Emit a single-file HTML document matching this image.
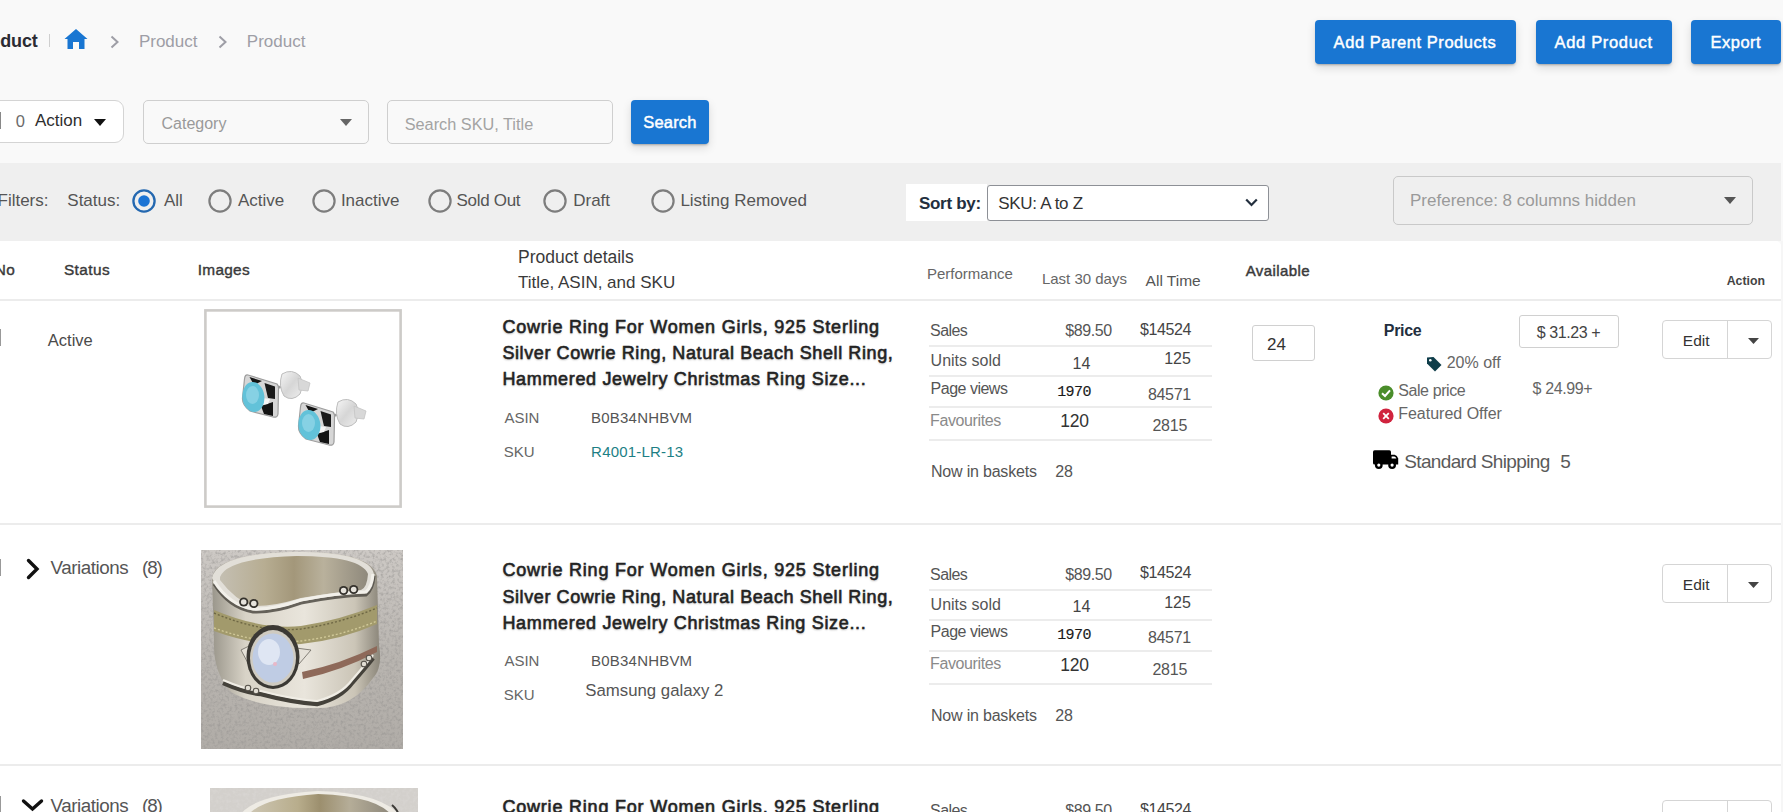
<!DOCTYPE html><html><head><meta charset="utf-8"><style>
html,body{margin:0;padding:0;width:1783px;height:812px;overflow:hidden;background:#f9f9f9;font-family:"Liberation Sans",sans-serif}
.t{position:absolute;line-height:1;white-space:nowrap}
.r{position:absolute}
.btn{position:absolute;background:#1976d2;border-radius:4px;box-shadow:0 3px 1px -2px rgba(0,0,0,0.12),0 2px 2px 0 rgba(0,0,0,0.1),0 4px 10px 0 rgba(0,0,0,0.12)}
</style></head><body>
<div class="r" style="left:0px;top:0px;width:1783px;height:163px;background:#f9f9f9"></div>
<div class="r" style="left:0px;top:163px;width:1781px;height:78px;background:#efefef"></div>
<div class="r" style="left:0px;top:241px;width:1781px;height:571px;background:#fff;border-top-right-radius:5px"></div>
<div class="r" style="left:1781px;top:241px;width:2px;height:571px;background:#f6f6f6"></div>
<div class="t" style="right:1745.5px;top:32.1px;font-size:18px;font-weight:bold;color:#2b2b33;letter-spacing:-0.2px">Product</div>
<div class="r" style="left:49px;top:34px;width:1px;height:13px;background:#cfcfcf"></div>
<svg class="r" style="left:64px;top:28px" width="24" height="22" viewBox="0 0 24 22"><path d="M12 1 L23.5 11 L20.5 11 L20.5 21 L15 21 L15 14 L9 14 L9 21 L3.5 21 L3.5 11 L0.5 11 Z" fill="#1976d2"/></svg>
<svg class="r" style="left:110px;top:35px" width="10" height="14" viewBox="0 0 10 14"><path d="M1.5 1.5 L7.5 7 L1.5 12.5" stroke="#9e9ea6" stroke-width="2" fill="none"/></svg>
<svg class="r" style="left:218px;top:35px" width="10" height="14" viewBox="0 0 10 14"><path d="M1.5 1.5 L7.5 7 L1.5 12.5" stroke="#9e9ea6" stroke-width="2" fill="none"/></svg>
<div class="t" style="left:138.9px;top:32.7px;font-size:17px;color:#9e9ea6">Product</div>
<div class="t" style="left:246.8px;top:32.7px;font-size:17px;color:#9e9ea6">Product</div>
<div class="btn" style="left:1315px;top:20px;width:201px;height:44px;"></div>
<div class="t" style="left:1333.6px;top:33.7px;font-size:16.5px;color:#fff;letter-spacing:0.55px;-webkit-text-stroke:0.45px #fff">Add Parent Products</div>
<div class="btn" style="left:1536px;top:20px;width:136px;height:44px;"></div>
<div class="t" style="left:1554.6px;top:33.7px;font-size:16.5px;color:#fff;letter-spacing:0.66px;-webkit-text-stroke:0.45px #fff">Add Product</div>
<div class="btn" style="left:1691px;top:20px;width:90px;height:44px;"></div>
<div class="t" style="left:1710.6px;top:33.7px;font-size:16.5px;color:#fff;letter-spacing:0.48px;-webkit-text-stroke:0.45px #fff">Export</div>
<div class="r" style="left:-20px;top:100px;width:144px;height:43px;background:#fff;border:1px solid #d4d4d4;border-radius:9px;box-sizing:border-box"></div>
<div class="r" style="left:0px;top:112px;width:1px;height:17px;background:#888"></div>
<div class="t" style="left:15.7px;top:112.5px;font-size:16.5px;color:#6b6b6b">0</div>
<div class="t" style="left:35.0px;top:112.1px;font-size:17px;color:#2e2e2e">Action</div>
<svg class="r" style="left:94px;top:119px" width="12" height="7" viewBox="0 0 12 7"><path d="M0 0 L12 0 L6 7 Z" fill="#111"/></svg>
<div class="r" style="left:143px;top:100px;width:226px;height:44px;border:1px solid #cfcfcf;border-radius:5px;box-sizing:border-box"></div>
<div class="t" style="left:161.5px;top:116.2px;font-size:16px;color:#9a9a9a">Category</div>
<svg class="r" style="left:340px;top:119px" width="12" height="7" viewBox="0 0 12 7"><path d="M0 0 L12 0 L6 7 Z" fill="#666"/></svg>
<div class="r" style="left:387px;top:100px;width:226px;height:44px;border:1px solid #cfcfcf;border-radius:5px;box-sizing:border-box"></div>
<div class="t" style="left:404.7px;top:116.0px;font-size:16.3px;color:#a3a3a3">Search SKU, Title</div>
<div class="btn" style="left:631px;top:100px;width:78px;height:44px;"></div>
<div class="t" style="left:643.2px;top:113.6px;font-size:16.5px;color:#fff;letter-spacing:0.2px;-webkit-text-stroke:0.45px #fff">Search</div>
<div class="t" style="left:-2.5px;top:191.9px;font-size:17px;color:#555">Filters:</div>
<div class="t" style="left:67.3px;top:191.9px;font-size:17px;color:#555">Status:</div>
<svg class="r" style="left:131.8px;top:189px" width="24" height="24" viewBox="0 0 24 24"><circle cx="12" cy="12" r="10.6" stroke="#2468b0" stroke-width="2.3" fill="none"/><circle cx="12" cy="12" r="5.8" fill="#1a73d4"/></svg>
<div class="t" style="left:164.0px;top:191.9px;font-size:17px;color:#555">All</div>
<svg class="r" style="left:207.5px;top:189px" width="24" height="24" viewBox="0 0 24 24"><circle cx="12" cy="12" r="10.6" stroke="#7d7d7d" stroke-width="2.2" fill="none"/></svg>
<div class="t" style="left:238.0px;top:191.9px;font-size:17px;color:#555">Active</div>
<svg class="r" style="left:311.6px;top:189px" width="24" height="24" viewBox="0 0 24 24"><circle cx="12" cy="12" r="10.6" stroke="#7d7d7d" stroke-width="2.2" fill="none"/></svg>
<div class="t" style="left:340.9px;top:191.9px;font-size:17px;color:#555">Inactive</div>
<svg class="r" style="left:427.5px;top:189px" width="24" height="24" viewBox="0 0 24 24"><circle cx="12" cy="12" r="10.6" stroke="#7d7d7d" stroke-width="2.2" fill="none"/></svg>
<div class="t" style="left:456.5px;top:191.9px;font-size:17px;color:#555;letter-spacing:-0.3px">Sold Out</div>
<svg class="r" style="left:542.6px;top:189px" width="24" height="24" viewBox="0 0 24 24"><circle cx="12" cy="12" r="10.6" stroke="#7d7d7d" stroke-width="2.2" fill="none"/></svg>
<div class="t" style="left:573.2px;top:191.9px;font-size:17px;color:#555">Draft</div>
<svg class="r" style="left:650.7px;top:189px" width="24" height="24" viewBox="0 0 24 24"><circle cx="12" cy="12" r="10.6" stroke="#7d7d7d" stroke-width="2.2" fill="none"/></svg>
<div class="t" style="left:680.4px;top:192.3px;font-size:17px;color:#555">Listing Removed</div>
<div class="r" style="left:906px;top:184px;width:81px;height:37px;background:#fff"></div>
<div class="t" style="left:919.0px;top:194.6px;font-size:17px;font-weight:bold;color:#232f3e;letter-spacing:-0.3px">Sort by:</div>
<div class="r" style="left:987px;top:185px;width:282px;height:36px;background:#fff;border:1px solid #8d9096;border-radius:3px;box-sizing:border-box"></div>
<div class="t" style="left:998.2px;top:194.6px;font-size:17px;color:#333;letter-spacing:-0.3px">SKU: A to Z</div>
<svg class="r" style="left:1245px;top:198px" width="13" height="9" viewBox="0 0 13 9"><path d="M1.2 1.5 L6.5 7 L11.8 1.5" stroke="#232f3e" stroke-width="2.2" fill="none"/></svg>
<div class="r" style="left:1393px;top:176px;width:360px;height:49px;border:1px solid #c9c9c9;border-radius:5px;box-sizing:border-box"></div>
<div class="t" style="left:1410.0px;top:191.9px;font-size:17px;color:#9a9a9a">Preference: 8 columns hidden</div>
<svg class="r" style="left:1724px;top:197px" width="12" height="7" viewBox="0 0 12 7"><path d="M0 0 L12 0 L6 7 Z" fill="#555"/></svg>
<div class="t" style="left:-5.2px;top:261.8px;font-size:15.4px;color:#3a3a3a;-webkit-text-stroke:0.4px #3a3a3a;letter-spacing:0.3px">No</div>
<div class="t" style="left:63.9px;top:261.8px;font-size:15.4px;color:#3a3a3a;-webkit-text-stroke:0.4px #3a3a3a;letter-spacing:0.45px">Status</div>
<div class="t" style="left:197.7px;top:261.8px;font-size:15.4px;color:#3a3a3a;-webkit-text-stroke:0.4px #3a3a3a;letter-spacing:0.3px">Images</div>
<div class="t" style="left:518.0px;top:249.3px;font-size:17.5px;color:#3a3a3a">Product details</div>
<div class="t" style="left:518.0px;top:273.6px;font-size:17px;color:#3a3a3a">Title, ASIN, and SKU</div>
<div class="t" style="left:927.0px;top:266.0px;font-size:15px;color:#666">Performance</div>
<div class="t" style="left:1041.9px;top:271.0px;font-size:15px;color:#666">Last 30 days</div>
<div class="t" style="left:1145.6px;top:273.4px;font-size:15.5px;color:#555">All Time</div>
<div class="t" style="left:1245.7px;top:263.2px;font-size:15px;color:#3a3a3a;-webkit-text-stroke:0.45px #3a3a3a;letter-spacing:0.4px">Available</div>
<div class="t" style="left:1726.7px;top:275.1px;font-size:12.3px;font-weight:bold;color:#444">Action</div>
<div class="r" style="left:0px;top:299px;width:1781px;height:2px;background:#ececec"></div>
<div class="r" style="left:0px;top:329px;width:1px;height:17px;background:#999"></div>
<div class="t" style="left:47.8px;top:331.5px;font-size:16.5px;color:#4a4a4a">Active</div>
<svg class="r" style="left:204px;top:309px" width="198" height="199" viewBox="204 309 198 199"><defs><linearGradient id="bk" x1="0" y1="0" x2="1" y2="1"><stop offset="0" stop-color="#f6f6f6"/><stop offset="0.5" stop-color="#d6d6d6"/><stop offset="1" stop-color="#eeeeee"/></linearGradient></defs><rect x="205.4" y="310.4" width="195.2" height="196.2" fill="#fff" stroke="#cdcbc8" stroke-width="2.6"/><g transform="translate(0,0)"><path d="M276 388 L292 384" stroke="#9c9c9c" stroke-width="2.5"/><path d="M282 374 Q292 368 300 376 Q304 384 300 394 Q292 402 284 396 Q278 386 282 374 Z" fill="url(#bk)" stroke="#bdbdbd" stroke-width="1"/><path d="M298 378 L310 383 L308 391 L299 390 Z" fill="#d8d8d8" stroke="#c4c4c4" stroke-width="0.8"/><path d="M248 375 L277 384 Q279 386 278.5 390 L278 414 Q277.5 418 273 417 L250 411 Q242 405 242.5 398 L244.5 379 Q245 374 248 375 Z" fill="#d6d6d6" stroke="#9e9e9e" stroke-width="1.2"/><path d="M249.5 377 L262 381 L254 385 Z" fill="#141414"/><path d="M264.5 383 L275 386.5 L275 399 L268 398 Q266 390 264.5 383 Z" fill="#1a1a1a"/><path d="M261 406 L273 402 L273 416 L264 414 Z" fill="#141414"/><path d="M262 398 L270 399 L268 404 L261 405 Z" fill="#f6f6f6"/><ellipse cx="253.4" cy="397" rx="11" ry="15" fill="#62c2d9" transform="rotate(-6 253.4 397)"/><ellipse cx="252.5" cy="395" rx="6.5" ry="9" fill="#86d1e4"/></g><g transform="translate(56,28)"><path d="M276 388 L292 384" stroke="#9c9c9c" stroke-width="2.5"/><path d="M282 374 Q292 368 300 376 Q304 384 300 394 Q292 402 284 396 Q278 386 282 374 Z" fill="url(#bk)" stroke="#bdbdbd" stroke-width="1"/><path d="M298 378 L310 383 L308 391 L299 390 Z" fill="#d8d8d8" stroke="#c4c4c4" stroke-width="0.8"/><path d="M248 375 L277 384 Q279 386 278.5 390 L278 414 Q277.5 418 273 417 L250 411 Q242 405 242.5 398 L244.5 379 Q245 374 248 375 Z" fill="#d6d6d6" stroke="#9e9e9e" stroke-width="1.2"/><path d="M249.5 377 L262 381 L254 385 Z" fill="#141414"/><path d="M264.5 383 L275 386.5 L275 399 L268 398 Q266 390 264.5 383 Z" fill="#1a1a1a"/><path d="M261 406 L273 402 L273 416 L264 414 Z" fill="#141414"/><path d="M262 398 L270 399 L268 404 L261 405 Z" fill="#f6f6f6"/><ellipse cx="253.4" cy="397" rx="11" ry="15" fill="#62c2d9" transform="rotate(-6 253.4 397)"/><ellipse cx="252.5" cy="395" rx="6.5" ry="9" fill="#86d1e4"/></g></svg>
<div class="t" style="left:502.4px;top:317.8px;font-size:18px;color:#222;letter-spacing:0.798px;-webkit-text-stroke:0.55px #222;text-shadow:0 1px 2px rgba(0,0,0,0.3)">Cowrie Ring For Women Girls, 925 Sterling</div>
<div class="t" style="left:502.4px;top:344.0px;font-size:18px;color:#222;letter-spacing:0.596px;-webkit-text-stroke:0.55px #222;text-shadow:0 1px 2px rgba(0,0,0,0.3)">Silver Cowrie Ring, Natural Beach Shell Ring,</div>
<div class="t" style="left:502.4px;top:370.2px;font-size:18px;color:#222;letter-spacing:0.664px;-webkit-text-stroke:0.55px #222;text-shadow:0 1px 2px rgba(0,0,0,0.3)">Hammered Jewelry Christmas Ring Size...</div>
<div class="t" style="left:504.4px;top:409.8px;font-size:15px;color:#666">ASIN</div>
<div class="t" style="left:591.1px;top:409.8px;font-size:15px;color:#555;letter-spacing:0.2px">B0B34NHBVM</div>
<div class="t" style="left:503.8px;top:443.9px;font-size:15px;color:#666">SKU</div>
<div class="t" style="left:591.1px;top:443.9px;font-size:15px;color:#1d7f85;letter-spacing:0.2px">R4001-LR-13</div>
<div class="t" style="left:930.1px;top:323.4px;font-size:16px;color:#555;letter-spacing:-0.6px">Sales</div>
<div class="t" style="right:671.2px;top:323.4px;font-size:16px;color:#555;letter-spacing:-0.4px">$89.50</div>
<div class="t" style="right:592.1px;top:321.7px;font-size:16px;color:#444;letter-spacing:-0.4px">$14524</div>
<div class="r" style="left:929px;top:345px;width:283px;height:2px;background:#ececec"></div>
<div class="t" style="left:930.6px;top:353.4px;font-size:16px;color:#555">Units sold</div>
<div class="t" style="right:692.7px;top:355.7px;font-size:16px;color:#444">14</div>
<div class="t" style="right:592.1px;top:351.2px;font-size:16px;color:#444">125</div>
<div class="r" style="left:929px;top:375px;width:283px;height:2px;background:#ececec"></div>
<div class="t" style="left:930.6px;top:380.6px;font-size:16px;color:#555;letter-spacing:-0.5px">Page views</div>
<div class="t" style="right:692.2px;top:384.5px;font-size:15px;font-family:'Liberation Mono';color:#1a1a1a;letter-spacing:-0.6px;-webkit-text-stroke:0.15px #1a1a1a">1970</div>
<div class="t" style="right:592.1px;top:386.5px;font-size:16px;color:#555;letter-spacing:-0.3px">84571</div>
<div class="r" style="left:929px;top:406px;width:283px;height:2px;background:#ececec"></div>
<div class="t" style="left:930.1px;top:412.9px;font-size:16px;color:#8a8a8a;letter-spacing:-0.4px">Favourites</div>
<div class="t" style="right:694.4px;top:413.0px;font-size:17.5px;color:#333;letter-spacing:-0.3px">120</div>
<div class="t" style="right:595.8px;top:418.0px;font-size:16px;color:#555;letter-spacing:-0.2px">2815</div>
<div class="r" style="left:929px;top:439px;width:283px;height:2px;background:#ececec"></div>
<div class="t" style="left:931.0px;top:464.4px;font-size:16px;color:#555;letter-spacing:-0.2px">Now in baskets</div>
<div class="t" style="left:1055.2px;top:464.4px;font-size:16px;color:#555">28</div>
<div class="r" style="left:1662px;top:320px;width:110px;height:39px;border:1px solid #d5d5d5;border-radius:4px;box-sizing:border-box;background:#fff"></div>
<div class="r" style="left:1727px;top:321px;width:1px;height:37px;background:#d5d5d5"></div>
<div class="t" style="left:1682.8px;top:333.2px;font-size:15.5px;color:#333">Edit</div>
<svg class="r" style="left:1748px;top:338px" width="11" height="7" viewBox="0 0 11 7"><path d="M0 0 L11 0 L5.5 6 Z" fill="#444"/></svg>
<div class="r" style="left:1252px;top:325px;width:63px;height:36px;border:1px solid #d0d0d0;border-radius:3px;box-sizing:border-box"></div>
<div class="t" style="left:1267.1px;top:335.5px;font-size:17px;color:#333">24</div>
<div class="t" style="left:1383.8px;top:322.5px;font-size:16px;font-weight:bold;color:#232f3e;letter-spacing:-0.3px">Price</div>
<div class="r" style="left:1519px;top:315px;width:100px;height:33px;border:1px solid #d0d0d0;border-radius:3px;box-sizing:border-box"></div>
<div class="t" style="left:1536.7px;top:324.5px;font-size:16px;color:#444;letter-spacing:-0.4px">$ 31.23 +</div>
<svg class="r" style="left:1426px;top:356px" width="16" height="16" viewBox="0 0 16 16"><path d="M1 1.5 L7.5 1 L15.5 9 L9 15.5 L1 7.5 Z" fill="#0f3d4a"/><circle cx="4.3" cy="4.3" r="1.3" fill="#fff"/></svg>
<div class="t" style="left:1446.7px;top:354.9px;font-size:16px;color:#666">20% off</div>
<svg class="r" style="left:1378px;top:385px" width="16" height="16" viewBox="0 0 16 16"><circle cx="8" cy="8" r="7.6" fill="#4a8d2a"/><path d="M4 8.3 L7 11 L12 5.3" stroke="#fff" stroke-width="2" fill="none"/></svg>
<div class="t" style="left:1398.2px;top:383.2px;font-size:16px;color:#666;letter-spacing:-0.4px">Sale price</div>
<div class="t" style="left:1532.6px;top:381.3px;font-size:16px;color:#666;letter-spacing:-0.4px">$ 24.99+</div>
<svg class="r" style="left:1378px;top:408px" width="16" height="16" viewBox="0 0 16 16"><circle cx="8" cy="8" r="7.6" fill="#d0233e"/><path d="M5.2 5.2 L10.8 10.8 M10.8 5.2 L5.2 10.8" stroke="#fff" stroke-width="1.8"/></svg>
<div class="t" style="left:1398.2px;top:406.2px;font-size:16px;color:#666">Featured Offer</div>
<svg class="r" style="left:1372px;top:449px" width="27" height="21" viewBox="0 0 27 21"><rect x="1" y="1.2" width="18" height="14.4" rx="1.6" fill="#000"/><path d="M18 5.8 L22.6 5.8 Q25.2 6.6 26.2 9.6 L26.2 15.6 L18 15.6 Z" fill="#000"/><path d="M19.6 7.4 L22.4 7.4 Q23.8 8 24.4 9.6 L19.6 9.6 Z" fill="#fff"/><circle cx="6.8" cy="16.1" r="3.9" fill="#000"/><circle cx="6.8" cy="16.1" r="1.6" fill="#fff"/><circle cx="20.1" cy="16.1" r="3.9" fill="#000"/><circle cx="20.1" cy="16.1" r="1.6" fill="#fff"/></svg>
<div class="t" style="left:1404.3px;top:452.1px;font-size:19px;color:#5a5a5a;letter-spacing:-0.65px">Standard Shipping</div>
<div class="t" style="left:1560.3px;top:452.1px;font-size:19px;color:#5a5a5a">5</div>
<div class="r" style="left:0px;top:523px;width:1781px;height:2px;background:#ececec"></div>
<div class="r" style="left:0px;top:559px;width:1px;height:17px;background:#999"></div>
<svg class="r" style="left:26px;top:558px" width="14" height="22" viewBox="0 0 14 22"><path d="M2.5 2.5 L11 11 L2.5 19.5" stroke="#111" stroke-width="3.4" fill="none" stroke-linecap="round"/></svg>
<div class="t" style="left:50.5px;top:559.4px;font-size:18.8px;color:#555;letter-spacing:-0.45px">Variations</div>
<div class="t" style="left:141.9px;top:559.4px;font-size:18.8px;color:#555;letter-spacing:-1px">(8)</div>
<svg class="r" style="left:201px;top:550px" width="202" height="199" viewBox="0 0 202 199.00"><defs><filter id="nza" x="0" y="0" width="1" height="1"><feTurbulence type="fractalNoise" baseFrequency="0.35" numOctaves="3" seed="7"/><feColorMatrix values="0 0 0 0 0.30  0 0 0 0 0.29  0 0 0 0 0.28  0 0 0 2.2 -0.95"/></filter><linearGradient id="rga" x1="0" x2="1"><stop offset="0" stop-color="#9a968b"/><stop offset="0.2" stop-color="#d8d3c7"/><stop offset="0.55" stop-color="#e9e5dc"/><stop offset="0.85" stop-color="#cbc5b7"/><stop offset="1" stop-color="#8a8579"/></linearGradient><linearGradient id="iga" x1="0" x2="1"><stop offset="0" stop-color="#c4bfb2"/><stop offset="0.3" stop-color="#b7ad92"/><stop offset="0.5" stop-color="#a3977a"/><stop offset="0.7" stop-color="#b9b19c"/><stop offset="1" stop-color="#8f897c"/></linearGradient><linearGradient id="bga" x1="0" y1="0" x2="0" y2="1"><stop offset="0" stop-color="#cdc9c5"/><stop offset="0.5" stop-color="#bab6b1"/><stop offset="1" stop-color="#b0aca7"/></linearGradient></defs><rect width="202" height="200" fill="url(#bga)"/><rect width="202" height="200" filter="url(#nza)" opacity="0.6"/><path d="M11 28 Q14 4 92 2 Q170 1 176 26 L178 95 Q182 118 172 128 Q150 160 112 158 Q60 159 30 142 Q12 122 13 92 Z" fill="url(#rga)"/><path d="M11 28 Q16 3 96 2.5 Q168 2 173 24 Q174 40 165 43 Q140 44 100 51 Q70 61 52 60 Q30 54 13 32 Z" fill="#e2dfd8"/><path d="M19 27 Q26 8 96 6 Q160 6 167 24 Q166 38 160 40 Q135 42 100 48 Q70 57 52 56 Q34 50 19 30 Z" fill="url(#iga)"/><path d="M13 34 Q28 58 52 62 Q72 63 100 53 Q135 46 165 45 Q172 40 173 26" stroke="#4f4b44" stroke-width="3" fill="none" opacity="0.85"/><path d="M13 31 Q28 55 52 59 Q72 60 100 50 Q135 43 165 42 Q171 37 172 24" stroke="#f2f0ea" stroke-width="3.2" fill="none"/><circle cx="42.7" cy="52" r="4.6" fill="#34312c"/><circle cx="42.7" cy="52" r="2.8" fill="#e6e3dc"/><circle cx="52.8" cy="53.5" r="4.6" fill="#34312c"/><circle cx="52.8" cy="53.5" r="2.8" fill="#e6e3dc"/><circle cx="142.6" cy="40.5" r="4.6" fill="#34312c"/><circle cx="142.6" cy="40.5" r="2.8" fill="#e6e3dc"/><circle cx="152.7" cy="39.5" r="4.6" fill="#34312c"/><circle cx="152.7" cy="39.5" r="2.8" fill="#e6e3dc"/><path d="M13 60 Q60 80 100 76 Q140 70 176 55 L176 74 Q140 90 100 94 Q60 98 13 81 Z" fill="#a29a6c"/><path d="M13 63 Q60 83 100 79 Q140 73 176 58" stroke="#6e6744" stroke-width="1.4" stroke-dasharray="2 2" fill="none"/><path d="M13 78 Q60 95 100 91 Q140 86 176 71" stroke="#d0c897" stroke-width="1.4" stroke-dasharray="2 2" fill="none"/><path d="M101 122 Q140 114 176 96 L176 102 Q140 121 102 129 Z" fill="#8e6959"/><path d="M22 133 Q45 143 60 144 Q90 152 116 154 Q140 148 151 133 Q164 118 172 108" stroke="#45423b" stroke-width="4.5" fill="none"/><path d="M22 130 Q45 140 60 141 Q90 149 116 151 Q140 145 151 130 Q164 115 172 105" stroke="#f0ede5" stroke-width="2.2" fill="none"/><circle cx="47" cy="138" r="2.8" fill="#e2ded4" stroke="#55514a" stroke-width="1.1"/><circle cx="55" cy="141" r="2.8" fill="#e2ded4" stroke="#55514a" stroke-width="1.1"/><circle cx="163" cy="114" r="2.8" fill="#e2ded4" stroke="#55514a" stroke-width="1.1"/><circle cx="168" cy="108" r="2.8" fill="#e2ded4" stroke="#55514a" stroke-width="1.1"/><path d="M40 100 L50 95 L48 115 Z" fill="#e5e1d8" stroke="#6a665e" stroke-width="0.8"/><path d="M95 98 L110 100 L98 114 Z" fill="#e5e1d8" stroke="#6a665e" stroke-width="0.8"/><ellipse cx="72" cy="107" rx="26.5" ry="32" fill="#3b3934"/><ellipse cx="72" cy="108" rx="23" ry="28" fill="#cfcbc1"/><ellipse cx="72" cy="108" rx="20.5" ry="24.5" fill="#bfcce4"/><ellipse cx="68" cy="102" rx="11" ry="13" fill="#dfe6f3"/><circle cx="74" cy="114" r="2" fill="#e9b8c8"/></svg>
<div class="t" style="left:502.4px;top:561.3px;font-size:18px;color:#222;letter-spacing:0.798px;-webkit-text-stroke:0.55px #222;text-shadow:0 1px 2px rgba(0,0,0,0.3)">Cowrie Ring For Women Girls, 925 Sterling</div>
<div class="t" style="left:502.4px;top:587.5px;font-size:18px;color:#222;letter-spacing:0.596px;-webkit-text-stroke:0.55px #222;text-shadow:0 1px 2px rgba(0,0,0,0.3)">Silver Cowrie Ring, Natural Beach Shell Ring,</div>
<div class="t" style="left:502.4px;top:613.7px;font-size:18px;color:#222;letter-spacing:0.664px;-webkit-text-stroke:0.55px #222;text-shadow:0 1px 2px rgba(0,0,0,0.3)">Hammered Jewelry Christmas Ring Size...</div>
<div class="t" style="left:504.4px;top:653.3px;font-size:15px;color:#666">ASIN</div>
<div class="t" style="left:591.1px;top:653.3px;font-size:15px;color:#555;letter-spacing:0.2px">B0B34NHBVM</div>
<div class="t" style="left:503.8px;top:687.4px;font-size:15px;color:#666">SKU</div>
<div class="t" style="left:585.3px;top:682.8px;font-size:16.8px;color:#555">Samsung galaxy 2</div>
<div class="t" style="left:930.1px;top:566.9px;font-size:16px;color:#555;letter-spacing:-0.6px">Sales</div>
<div class="t" style="right:671.2px;top:566.9px;font-size:16px;color:#555;letter-spacing:-0.4px">$89.50</div>
<div class="t" style="right:592.1px;top:565.2px;font-size:16px;color:#444;letter-spacing:-0.4px">$14524</div>
<div class="r" style="left:929px;top:588.5px;width:283px;height:2px;background:#ececec"></div>
<div class="t" style="left:930.6px;top:596.9px;font-size:16px;color:#555">Units sold</div>
<div class="t" style="right:692.7px;top:599.2px;font-size:16px;color:#444">14</div>
<div class="t" style="right:592.1px;top:594.7px;font-size:16px;color:#444">125</div>
<div class="r" style="left:929px;top:618.5px;width:283px;height:2px;background:#ececec"></div>
<div class="t" style="left:930.6px;top:624.1px;font-size:16px;color:#555;letter-spacing:-0.5px">Page views</div>
<div class="t" style="right:692.2px;top:628.0px;font-size:15px;font-family:'Liberation Mono';color:#1a1a1a;letter-spacing:-0.6px;-webkit-text-stroke:0.15px #1a1a1a">1970</div>
<div class="t" style="right:592.1px;top:630.0px;font-size:16px;color:#555;letter-spacing:-0.3px">84571</div>
<div class="r" style="left:929px;top:649.5px;width:283px;height:2px;background:#ececec"></div>
<div class="t" style="left:930.1px;top:656.4px;font-size:16px;color:#8a8a8a;letter-spacing:-0.4px">Favourites</div>
<div class="t" style="right:694.4px;top:656.5px;font-size:17.5px;color:#333;letter-spacing:-0.3px">120</div>
<div class="t" style="right:595.8px;top:661.5px;font-size:16px;color:#555;letter-spacing:-0.2px">2815</div>
<div class="r" style="left:929px;top:682.5px;width:283px;height:2px;background:#ececec"></div>
<div class="t" style="left:931.0px;top:707.9px;font-size:16px;color:#555;letter-spacing:-0.2px">Now in baskets</div>
<div class="t" style="left:1055.2px;top:707.9px;font-size:16px;color:#555">28</div>
<div class="r" style="left:1662px;top:563.5px;width:110px;height:39px;border:1px solid #d5d5d5;border-radius:4px;box-sizing:border-box;background:#fff"></div>
<div class="r" style="left:1727px;top:564.5px;width:1px;height:37px;background:#d5d5d5"></div>
<div class="t" style="left:1682.8px;top:576.7px;font-size:15.5px;color:#333">Edit</div>
<svg class="r" style="left:1748px;top:581.5px" width="11" height="7" viewBox="0 0 11 7"><path d="M0 0 L11 0 L5.5 6 Z" fill="#444"/></svg>
<div class="r" style="left:0px;top:764px;width:1781px;height:2px;background:#ececec"></div>
<div class="r" style="left:0px;top:796px;width:1px;height:17px;background:#999"></div>
<svg class="r" style="left:21px;top:798px" width="23" height="14" viewBox="0 0 23 14"><path d="M2.5 3 L11.5 11 L20.5 3" stroke="#111" stroke-width="3.4" fill="none" stroke-linecap="round"/></svg>
<div class="t" style="left:50.5px;top:797.4px;font-size:18.8px;color:#555;letter-spacing:-0.45px">Variations</div>
<div class="t" style="left:141.9px;top:797.4px;font-size:18.8px;color:#555;letter-spacing:-1px">(8)</div>
<svg class="r" style="left:210px;top:788px" width="208" height="30" viewBox="210 788 208 30"><defs><linearGradient id="r3" x1="0" x2="1"><stop offset="0" stop-color="#cfc8b6"/><stop offset="0.35" stop-color="#b8ad8c"/><stop offset="0.5" stop-color="#9c8f6e"/><stop offset="0.7" stop-color="#b5ad98"/><stop offset="1" stop-color="#8a8478"/></linearGradient><filter id="nz3"><feTurbulence type="fractalNoise" baseFrequency="0.3" numOctaves="2" seed="2"/><feColorMatrix values="0 0 0 0 0.75  0 0 0 0 0.73  0 0 0 0 0.72  0 0 0 1.5 -0.6"/></filter></defs><rect x="210" y="788" width="208" height="30" fill="#d3d0cc"/><rect x="210" y="788" width="208" height="30" filter="url(#nz3)" opacity="0.5"/><path d="M238 818 Q250 795 318 791 Q385 793 402 818 Z" fill="#eeebe4"/><path d="M246 818 Q258 798 318 794 Q380 796 394 818 Z" fill="url(#r3)"/><path d="M392 805 Q398 810 400 818" stroke="#3c3a36" stroke-width="2" fill="none"/></svg>
<div class="t" style="left:502.4px;top:797.8px;font-size:18px;color:#222;letter-spacing:0.798px;-webkit-text-stroke:0.55px #222;text-shadow:0 1px 2px rgba(0,0,0,0.3)">Cowrie Ring For Women Girls, 925 Sterling</div>
<div class="t" style="left:502.4px;top:824.0px;font-size:18px;color:#222;letter-spacing:0.596px;-webkit-text-stroke:0.55px #222;text-shadow:0 1px 2px rgba(0,0,0,0.3)">Silver Cowrie Ring, Natural Beach Shell Ring,</div>
<div class="t" style="left:502.4px;top:850.2px;font-size:18px;color:#222;letter-spacing:0.664px;-webkit-text-stroke:0.55px #222;text-shadow:0 1px 2px rgba(0,0,0,0.3)">Hammered Jewelry Christmas Ring Size...</div>
<div class="t" style="left:504.4px;top:889.8px;font-size:15px;color:#666">ASIN</div>
<div class="t" style="left:591.1px;top:889.8px;font-size:15px;color:#555;letter-spacing:0.2px">B0B34NHBVM</div>
<div class="t" style="left:503.8px;top:923.9px;font-size:15px;color:#666">SKU</div>
<div class="t" style="left:585.3px;top:919.3px;font-size:16.8px;color:#555">Samsung galaxy 2</div>
<div class="t" style="left:930.1px;top:803.4px;font-size:16px;color:#555;letter-spacing:-0.6px">Sales</div>
<div class="t" style="right:671.2px;top:803.4px;font-size:16px;color:#555;letter-spacing:-0.4px">$89.50</div>
<div class="t" style="right:592.1px;top:801.7px;font-size:16px;color:#444;letter-spacing:-0.4px">$14524</div>
<div class="r" style="left:929px;top:825px;width:283px;height:2px;background:#ececec"></div>
<div class="t" style="left:930.6px;top:833.4px;font-size:16px;color:#555">Units sold</div>
<div class="t" style="right:692.7px;top:835.7px;font-size:16px;color:#444">14</div>
<div class="t" style="right:592.1px;top:831.2px;font-size:16px;color:#444">125</div>
<div class="r" style="left:929px;top:855px;width:283px;height:2px;background:#ececec"></div>
<div class="t" style="left:930.6px;top:860.6px;font-size:16px;color:#555;letter-spacing:-0.5px">Page views</div>
<div class="t" style="right:692.2px;top:864.5px;font-size:15px;font-family:'Liberation Mono';color:#1a1a1a;letter-spacing:-0.6px;-webkit-text-stroke:0.15px #1a1a1a">1970</div>
<div class="t" style="right:592.1px;top:866.5px;font-size:16px;color:#555;letter-spacing:-0.3px">84571</div>
<div class="r" style="left:929px;top:886px;width:283px;height:2px;background:#ececec"></div>
<div class="t" style="left:930.1px;top:892.9px;font-size:16px;color:#8a8a8a;letter-spacing:-0.4px">Favourites</div>
<div class="t" style="right:694.4px;top:893.0px;font-size:17.5px;color:#333;letter-spacing:-0.3px">120</div>
<div class="t" style="right:595.8px;top:898.0px;font-size:16px;color:#555;letter-spacing:-0.2px">2815</div>
<div class="r" style="left:929px;top:919px;width:283px;height:2px;background:#ececec"></div>
<div class="t" style="left:931.0px;top:944.4px;font-size:16px;color:#555;letter-spacing:-0.2px">Now in baskets</div>
<div class="t" style="left:1055.2px;top:944.4px;font-size:16px;color:#555">28</div>
<div class="r" style="left:1662px;top:800px;width:110px;height:39px;border:1px solid #d5d5d5;border-radius:4px;box-sizing:border-box;background:#fff"></div>
<div class="r" style="left:1727px;top:801px;width:1px;height:37px;background:#d5d5d5"></div>
<div class="t" style="left:1682.8px;top:813.2px;font-size:15.5px;color:#333">Edit</div>
<svg class="r" style="left:1748px;top:818px" width="11" height="7" viewBox="0 0 11 7"><path d="M0 0 L11 0 L5.5 6 Z" fill="#444"/></svg>
</body></html>
